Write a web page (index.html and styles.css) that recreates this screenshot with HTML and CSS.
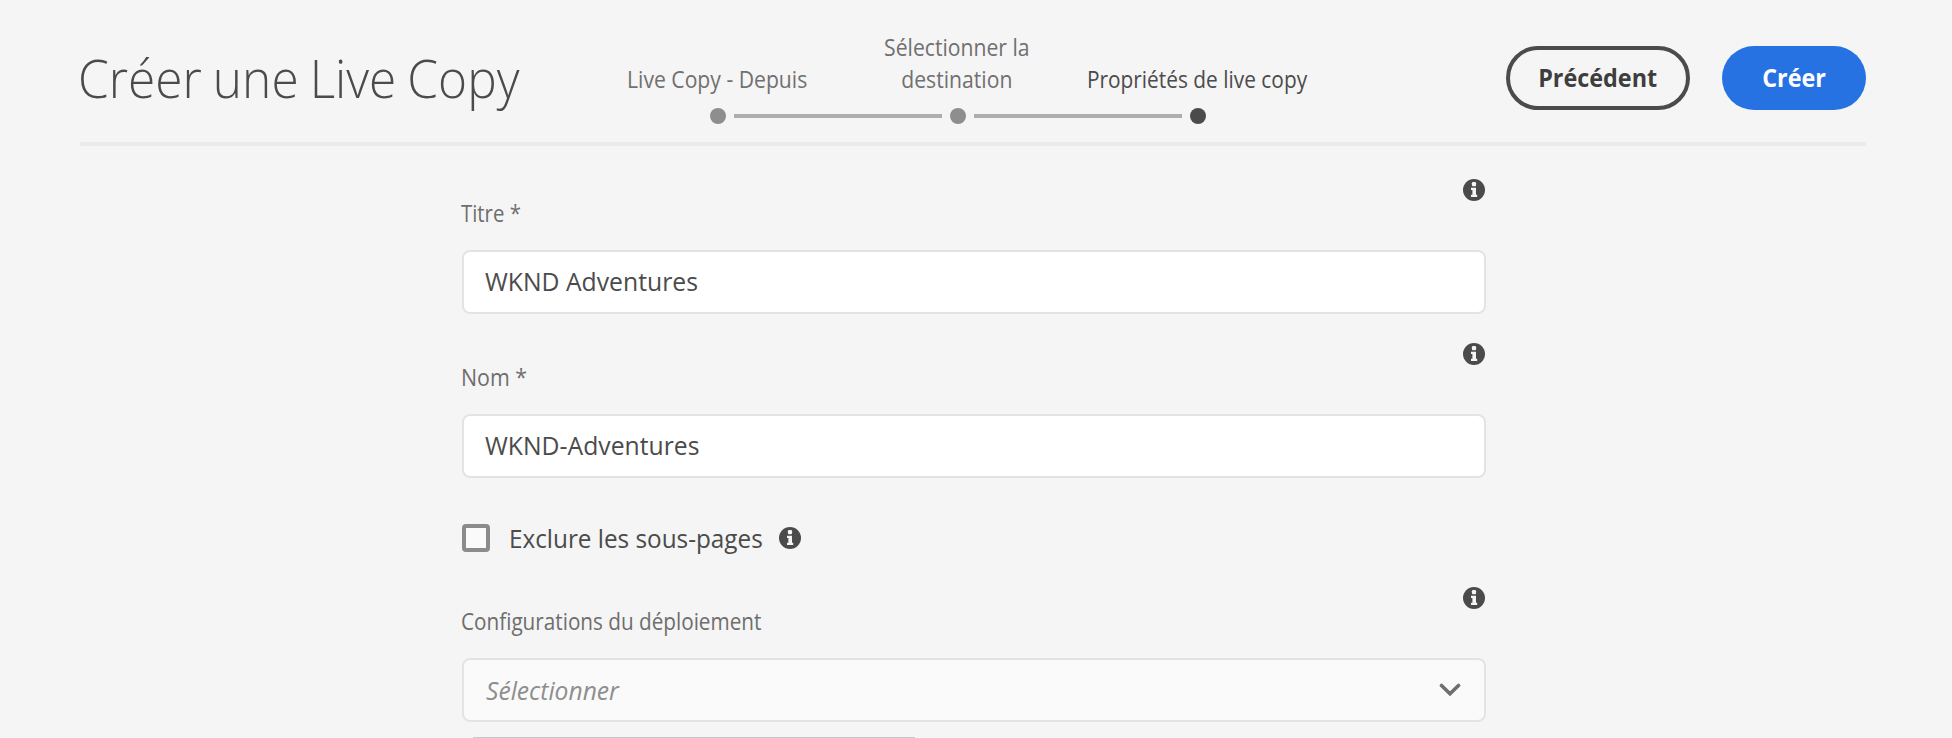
FILE: index.html
```html
<!DOCTYPE html>
<html lang="fr">
<head>
<meta charset="utf-8">
<title>Créer une Live Copy</title>
<link rel="stylesheet" href="styles.css">
</head>
<body>
<svg class="defs" width="0" height="0">
  <symbol id="info" viewBox="0 0 22 22">
    <circle cx="11" cy="11" r="11" fill="#4b4b4b"/>
    <rect x="8.9" y="3" width="4.2" height="4.2" rx="1.2" fill="#f5f5f5"/>
    <path d="M8 8.8h5v7h1.2v2.2H8v-2.2h1.4v-4.8H8z" fill="#f5f5f5"/>
  </symbol>
</svg>
<header class="header">
  <h1 class="title"><span class="t">Créer une Live Copy</span></h1>
  <div class="wizard">
    <div class="steps">
      <div class="step"><span class="t">Live Copy - Depuis</span></div>
      <div class="step"><span class="t">Sélectionner la<br>destination</span></div>
      <div class="step current"><span class="t">Propriétés de live copy</span></div>
    </div>
    <div class="track">
      <i class="dot"></i><i class="line"></i><i class="dot"></i><i class="line"></i><i class="dot active"></i>
    </div>
  </div>
  <div class="actions">
    <button class="btn secondary"><span class="t">Précédent</span></button>
    <button class="btn primary"><span class="t">Créer</span></button>
  </div>
</header>
<main class="form">
  <div class="field">
    <div class="head"><label class="label"><span class="t">Titre *</span></label><svg class="info"><use href="#info"/></svg></div>
    <div class="input"><span class="t">WKND Adventures</span></div>
  </div>
  <div class="field">
    <div class="head"><label class="label name"><span class="t">Nom *</span></label><svg class="info"><use href="#info"/></svg></div>
    <div class="input"><span class="t">WKND-Adventures</span></div>
  </div>
  <div class="check">
    <i class="box"></i><span class="checklabel"><span class="t">Exclure les sous-pages</span></span><svg class="info"><use href="#info"/></svg>
  </div>
  <div class="field">
    <div class="head"><label class="label config"><span class="t">Configurations du déploiement</span></label><svg class="info"><use href="#info"/></svg></div>
    <div class="input select"><span class="t">Sélectionner</span>
      <svg class="chevron" viewBox="0 0 22 14"><path d="M2.5 2.5 11 10.7 19.5 2.5" fill="none" stroke="#6e6e6e" stroke-width="3.6" stroke-linecap="round"/></svg>
    </div>
  </div>
  <div class="list"></div>
</main>
</body>
</html>
```
FILE: styles.css
```css
* { box-sizing: border-box; }
body {
  margin: 0;
  height: 738px;
  overflow: hidden;
  background: #f5f5f5;
  color: #4b4b4b;
  font-family: "Open Sans", "Noto Sans", sans-serif;
}
.defs { display: block; }
.t { display: inline-block; transform-origin: 0 50%; white-space: nowrap; }

.header {
  display: flex;
  align-items: flex-start;
  width: 1786px;
  height: 146px;
  margin-left: 80px;
  border-bottom: 4px solid #eaeaea;
}
.title {
  flex: 0 0 518px;
  margin: 45px 0 0;
  font-size: 54px;
  font-weight: 300;
  line-height: 64px;
  word-spacing: -2px;
}
.title .t { transform: translateX(-2px) scaleX(0.918); }

.wizard { width: 720px; padding-top: 31px; }
.steps { display: flex; align-items: flex-end; height: 64px; }
.step {
  display: flex;
  flex: 0 0 240px;
  justify-content: center;
  color: #707070;
  font-size: 23.5px;
  line-height: 32px;
  text-align: center;
}
.step .t { transform-origin: 50% 50%; transform: translateX(-1px) scaleX(0.9); }
.step.current { color: #4b4b4b; }
.step.current .t { transform: translateX(-5px) scaleX(0.888); }
.track { display: flex; align-items: center; height: 16px; margin-top: 13px; padding: 0 112px; }
.dot { width: 16px; height: 16px; border-radius: 50%; background: #8e8e8e; }
.active { background: #4b4b4b; }
.line { flex: 1; height: 4px; margin: 0 8px; background: #adadad; }

.actions { display: flex; gap: 32px; margin: 46px 0 0 auto; }
.btn {
  width: 144px;
  height: 64px;
  padding: 0 0 3px;
  border: 0;
  border-radius: 32px;
  font: 700 25px/36px "Open Sans", sans-serif;
}
.btn .t { transform-origin: 50% 50%; transform: scaleX(0.935); }
.secondary { width: 184px; border: 4px solid #4b4b4b; background: transparent; color: #3e3e3e; }
.primary { background: #2672e2; color: #fff; }

.form { width: 1024px; margin-left: 462px; padding-top: 33px; }
.field { margin-bottom: 29px; }
.head { display: flex; justify-content: space-between; height: 71px; }
.label { margin: 18px 0 0 -1px; color: #6e6e6e; font-size: 23px; line-height: 32px; }
.label .t { transform: scaleX(0.885); }
.label.name .t { transform: scaleX(0.93); }
.label.config .t { transform: scaleX(0.9); }
.info { display: block; width: 22px; height: 22px; margin-right: 1px; }
.input {
  display: flex;
  align-items: center;
  justify-content: space-between;
  height: 64px;
  padding: 0 23px 3px 21px;
  border: 2px solid #e3e3e3;
  border-radius: 8px;
  background: #fff;
  font-size: 25.5px;
  line-height: 36px;
}
.input .t { transform: scaleX(0.97); }
.input.select { padding: 0 23px 0 22px; background: #fafafa; color: #8e8e8e; font-style: italic; }
.input.select .t { transform: scaleX(0.965); }
.chevron { width: 22px; height: 14px; }

.check { display: flex; align-items: center; height: 28px; margin: 46px 0 35px; }
.box { width: 28px; height: 28px; border: 4px solid #8b8b8b; border-radius: 4px; background: #fafafa; }
.checklabel { width: 270px; margin-left: 19px; font-size: 25.5px; line-height: 36px; }
.checklabel .t { transform: scaleX(0.953); }
.list { width: 442px; height: 1px; margin: -14px 0 0 11px; background: #c8c8c8; }
```
